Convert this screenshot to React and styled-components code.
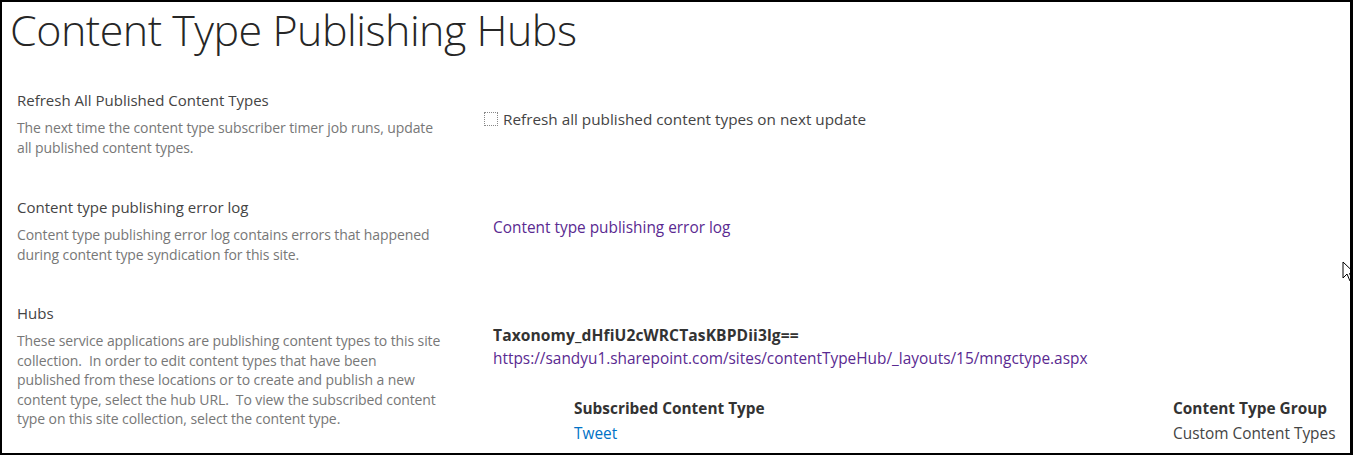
import React from 'react';
import styled, { createGlobalStyle } from 'styled-components';

const GlobalStyle = createGlobalStyle`
  html, body {
    margin: 0;
    padding: 0;
    background: #fff;
  }
  body {
    font-family: "Open Sans", "Liberation Sans", sans-serif;
    color: #444;
  }
`;

const SECTIONS = [
  {
    title: 'Refresh All Published Content Types',
    description: [
      'The next time the content type subscriber timer job runs, update',
      'all published content types.',
    ],
    kind: 'refresh',
  },
  {
    title: 'Content type publishing error log',
    description: [
      'Content type publishing error log contains errors that happened',
      'during content type syndication for this site.',
    ],
    kind: 'log',
  },
  {
    title: 'Hubs',
    description: [
      'These service applications are publishing content types to this site',
      'collection.\u00a0 In order to edit content types that have been',
      'published from these locations or to create and publish a new',
      'content type, select the hub URL.\u00a0 To view the subscribed content',
      'type on this site collection, select the content type.',
    ],
    kind: 'hubs',
  },
];

export default function App() {
  return (
    <>
      <GlobalStyle />
      <Frame>
        <PageTitle>Content Type Publishing Hubs</PageTitle>
        <Sections>
          {SECTIONS.map(section => (
            <Section key={section.kind} kind={section.kind}>
              <Info>
                <SectionTitle>{section.title}</SectionTitle>
                <Description>
                  {section.description.map(line => (
                    <div key={line}>{line}</div>
                  ))}
                </Description>
              </Info>
              <Control kind={section.kind}>{renderControl(section.kind)}</Control>
            </Section>
          ))}
        </Sections>
        <Cursor width="14" height="22" viewBox="0 0 14 22">
          <path
            d="M1 1 L1 17 L5 13 L8 20 L10.5 19 L7.5 12.5 L13 12.5 Z"
            fill="#fff"
            stroke="#000"
            strokeWidth="1"
            strokeLinejoin="miter"
          />
        </Cursor>
      </Frame>
    </>
  );
}

function renderControl(kind) {
  if (kind === 'refresh') {
    return (
      <CheckRow>
        <Checkbox />
        <span>Refresh all published content types on next update</span>
      </CheckRow>
    );
  }
  if (kind === 'log') {
    return <VisitedLink href="#">Content type publishing error log</VisitedLink>;
  }
  return (
    <Hub>
      <HubName>Taxonomy_dHfiU2cWRCTasKBPDii3lg==</HubName>
      <VisitedLink href="#">
        https://sandyu1.sharepoint.com/sites/contentTypeHub/_layouts/15/mngctype.aspx
      </VisitedLink>
      <HubTable>
        <HeadCell>Subscribed Content Type</HeadCell>
        <HeadCell>Content Type Group</HeadCell>
        <Cell>
          <TypeLink href="#">Tweet</TypeLink>
        </Cell>
        <Cell>Custom Content Types</Cell>
      </HubTable>
    </Hub>
  );
}

const Frame = styled.div`
  position: relative;
  width: 1353px;
  height: 455px;
  box-sizing: border-box;
  border: 2px solid #000;
  border-right-width: 3px;
  overflow: hidden;
`;

const PageTitle = styled.h1`
  margin: 0;
  padding: 0 0 0 8px;
  font-family: "Open Sans", sans-serif;
  font-weight: 300;
  font-size: 43px;
  line-height: 56px;
  color: #262626;
  letter-spacing: -0.5px;
`;

const Sections = styled.div`
  display: flex;
  flex-direction: column;
  padding: 32px 0 0 15px;
`;

const Section = styled.div`
  display: grid;
  grid-template-columns: 466px 1fr;
  min-height: ${props => (props.kind === 'hubs' ? 150 : 107)}px;
  &:nth-child(2) {
    min-height: 106px;
  }
`;

const Info = styled.div`
  display: flex;
  flex-direction: column;
  gap: 8px;
`;

const SectionTitle = styled.div`
  font-size: 15px;
  line-height: 20px;
  color: #444;
`;

const Description = styled.div`
  font-size: 14px;
  line-height: 19.6px;
  color: #777;
  letter-spacing: -0.1px;
`;

const Control = styled.div`
  padding-top: ${props =>
    props.kind === 'refresh' ? 19 : props.kind === 'log' ? 21 : 22}px;
  padding-left: ${props => (props.kind === 'refresh' ? 0 : 10)}px;
  font-size: 15.4px;
  line-height: 20px;
`;

const CheckRow = styled.label`
  display: flex;
  align-items: center;
  gap: 5px;
  color: #444;
  font-size: 15.3px;
`;

const Checkbox = styled.span`
  display: inline-block;
  width: 14px;
  height: 14px;
  border: 1px dotted #888;
  box-sizing: border-box;
  margin-left: 1px;
`;

const VisitedLink = styled.a`
  color: #5a2a91;
  text-decoration: none;
`;

const Hub = styled.div`
  display: flex;
  flex-direction: column;
  gap: 4px;
`;

const HubName = styled.div`
  font-weight: 700;
  font-size: 15.6px;
  color: #333;
  letter-spacing: 0.1px;
`;

const HubTable = styled.div`
  display: grid;
  grid-template-columns: 599px auto;
  row-gap: 5px;
  margin: 26px 0 0 81px;
`;

const HeadCell = styled.div`
  font-weight: 700;
  font-size: 15.4px;
  color: #333;
`;

const Cell = styled.div`
  color: #444;
  font-size: 15.4px;
`;

const TypeLink = styled.a`
  color: #0072c6;
  text-decoration: none;
`;

const Cursor = styled.svg`
  position: absolute;
  left: 1340px;
  top: 259px;
`;
